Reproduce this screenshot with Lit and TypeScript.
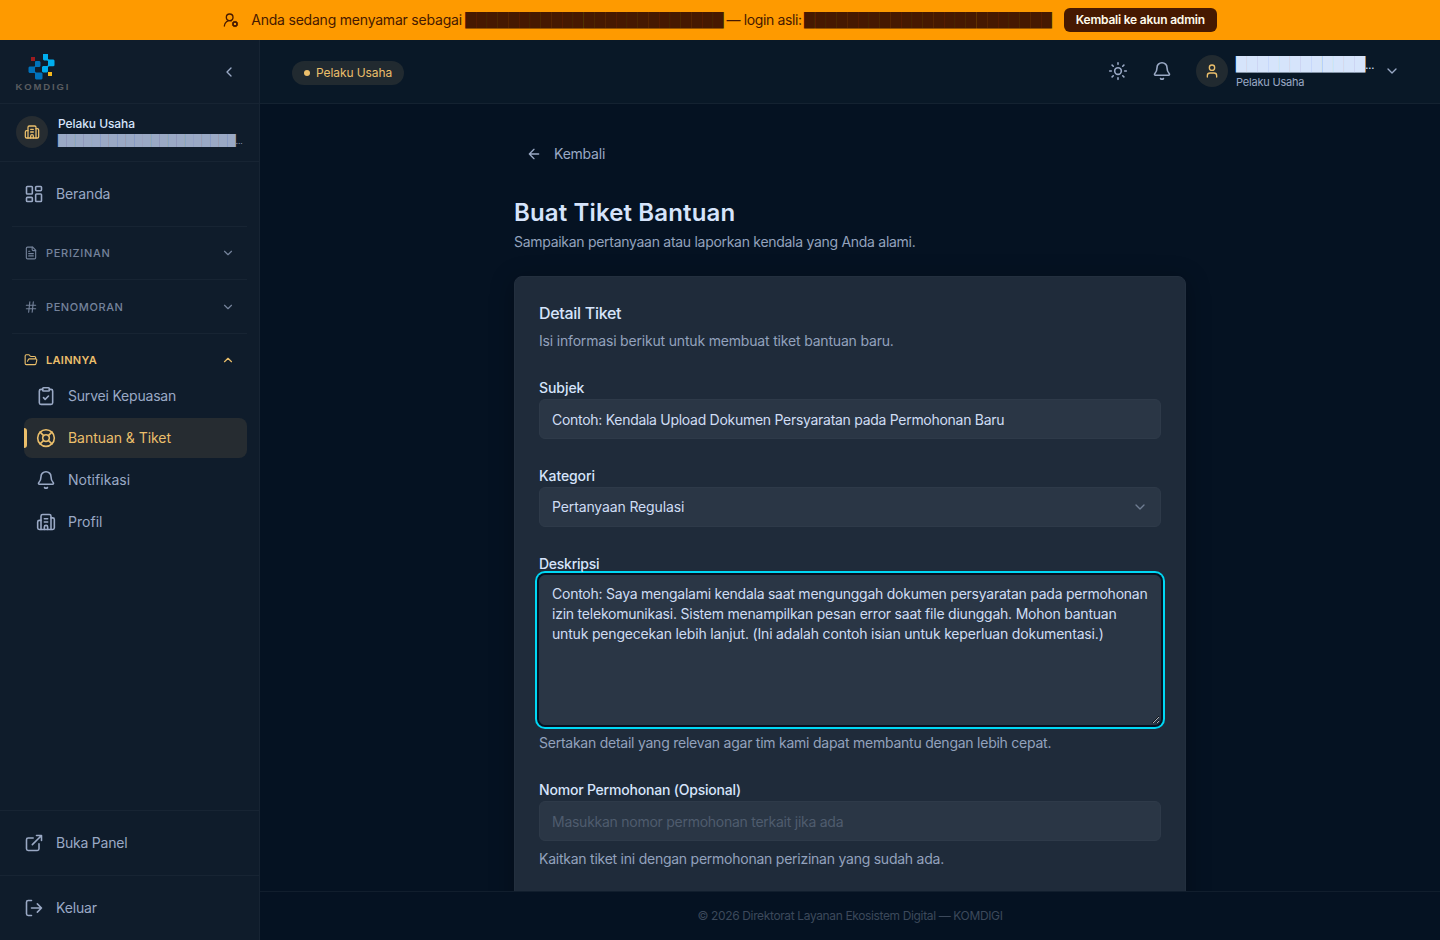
import { LitElement, html, css, svg, TemplateResult } from "lit";
import { customElement, property } from "lit/decorators.js";
import { classMap } from "lit/directives/class-map.js";

const ICONS: Record<string, TemplateResult> = {
  userCog: svg`<path d="M2 21a8 8 0 0 1 10.434-7.62"/><circle cx="10" cy="8" r="5"/><circle cx="18" cy="18" r="3"/><path d="m19.5 14.3-.4.9M16.9 20.8l-.4.9M21.7 19.5l-.9-.4M15.2 16.9l-.9-.4M21.7 16.5l-.9.4M15.2 19.1l-.9.4M19.5 21.7l-.4-.9M16.9 15.2l-.4-.9"/>`,
  dashboard: svg`<rect x="3" y="3" width="7" height="9" rx="1"/><rect x="14" y="3" width="7" height="5" rx="1"/><rect x="14" y="12" width="7" height="9" rx="1"/><rect x="3" y="16" width="7" height="5" rx="1"/>`,
  file: svg`<path d="M15 2H6a2 2 0 0 0-2 2v16a2 2 0 0 0 2 2h12a2 2 0 0 0 2-2V7Z"/><path d="M14 2v4a2 2 0 0 0 2 2h4M10 9H8M16 13H8M16 17H8"/>`,
  hash: svg`<path d="M4 9h16M4 15h16M10 3 8 21M16 3l-2 18"/>`,
  folder: svg`<path d="m6 14 1.5-2.9A2 2 0 0 1 9.24 10H20a2 2 0 0 1 1.94 2.5l-1.54 6a2 2 0 0 1-1.95 1.5H4a2 2 0 0 1-2-2V5a2 2 0 0 1 2-2h3.9a2 2 0 0 1 1.69.9l.81 1.2a2 2 0 0 0 1.67.9H18a2 2 0 0 1 2 2v2"/>`,
  clipboard: svg`<rect x="8" y="2" width="8" height="4" rx="1"/><path d="M16 4h2a2 2 0 0 1 2 2v14a2 2 0 0 1-2 2H6a2 2 0 0 1-2-2V6a2 2 0 0 1 2-2h2M9 14l2 2 4-4"/>`,
  buoy: svg`<circle cx="12" cy="12" r="10"/><circle cx="12" cy="12" r="4"/><path d="m4.93 4.93 4.24 4.24M14.83 9.17l4.24-4.24M14.83 14.83l4.24 4.24M9.17 14.83l-4.24 4.24"/>`,
  bell: svg`<path d="M10.268 21a2 2 0 0 0 3.464 0"/><path d="M3.262 15.326A1 1 0 0 0 4 17h16a1 1 0 0 0 .74-1.673C19.41 13.956 18 12.499 18 8A6 6 0 0 0 6 8c0 4.499-1.411 5.956-2.738 7.326"/>`,
  building: svg`<path d="M10 12h4M10 8h4M14 21v-3a2 2 0 0 0-4 0v3"/><path d="M6 10H4a2 2 0 0 0-2 2v7a2 2 0 0 0 2 2h16a2 2 0 0 0 2-2V9a2 2 0 0 0-2-2h-2"/><path d="M6 21V5a2 2 0 0 1 2-2h8a2 2 0 0 1 2 2v16"/>`,
  external: svg`<path d="M15 3h6v6M10 14 21 3M18 13v6a2 2 0 0 1-2 2H5a2 2 0 0 1-2-2V8a2 2 0 0 1 2-2h6"/>`,
  logout: svg`<path d="m16 17 5-5-5-5M21 12H9M9 21H5a2 2 0 0 1-2-2V5a2 2 0 0 1 2-2h4"/>`,
  sun: svg`<circle cx="12" cy="12" r="4"/><path d="M12 2v2M12 20v2M4.93 4.93l1.41 1.41M17.66 17.66l1.41 1.41M2 12h2M20 12h2M6.34 17.66l-1.41 1.41M19.07 4.93l-1.41 1.41"/>`,
  user: svg`<path d="M19 21v-2a4 4 0 0 0-4-4H9a4 4 0 0 0-4 4v2"/><circle cx="12" cy="7" r="4"/>`,
  arrow: svg`<path d="m12 19-7-7 7-7M19 12H5"/>`,
  left: svg`<path d="m15 18-6-6 6-6"/>`,
  down: svg`<path d="m6 9 6 6 6-6"/>`,
  up: svg`<path d="m18 15-6-6-6 6"/>`,
};

const icon = (name: string, size: number, weight = 2) =>
  html`<svg class="icon" width=${size} height=${size} viewBox="0 0 24 24" fill="none" stroke="currentColor" stroke-width=${weight} stroke-linecap="round" stroke-linejoin="round">${ICONS[name]}</svg>`;

/** Text with its own tracking, in pixels. */
const tx = (text: string, tracking: number) =>
  html`<span style="letter-spacing:${tracking}px">${text}</span>`;

const blocks = (count: number) => html`<span class="blocks">${"█".repeat(count)}</span>`;

const shared = css`
  * { box-sizing: border-box; }
  .icon { display: block; flex: none; }
  .blocks { font-family: "DejaVu Sans", sans-serif; letter-spacing: 0; }
`;

@customElement("impersonation-bar")
class ImpersonationBar extends LitElement {
  static styles = [shared, css`
    :host { display: flex; align-items: center; justify-content: center; height: 40px; flex: none;
      background: #fe9a00; color: #461901; font-size: 14px; font-weight: 400; line-height: 20px; }
    .msg { margin: 0 12px; white-space: pre; display: flex; }
    .from { width: 214px; }
    .sep { width: 80.5px; padding-left: 3px; }
    button { height: 24px; padding: 0 12px; border: 0; border-radius: 6px; background: #461901;
      color: #fffbeb; font: 600 12px/16px Inter, sans-serif; }
  `];
  render() {
    return html`${icon("userCog", 16)}
      <div class="msg"><span class="from">${tx("Anda sedang menyamar sebagai", -0.21)}</span>${blocks(24)}<span class="sep">${tx("— login asli:", -0.38)}</span>${blocks(23)}</div>
      <button>${tx("Kembali ke akun admin", -0.21)}</button>`;
  }
}

type Item = { label: string; icon: string; tracking: number; active?: boolean };

@customElement("nav-item")
class NavItem extends LitElement {
  @property({ attribute: false }) item!: Item;
  static styles = [shared, css`
    :host { display: block; }
    .item { height: 40px; display: flex; align-items: center; gap: 12px; padding: 0 12px;
      border-radius: 8px; font-size: 14px; line-height: 20px; position: relative; }
    .active { background: #262c31; color: #ebbf6b; }
    .active::before { content: ""; position: absolute; left: 0; top: 10px; width: 3px; height: 20px;
      border-radius: 0 3px 3px 0; background: #ebbf6b; }
  `];
  render() {
    const { label, icon: name, tracking, active } = this.item;
    return html`<div class=${classMap({ item: true, active: !!active })}>${icon(name, 20, 1.9)}${tx(label, tracking)}</div>`;
  }
}

@customElement("side-bar")
class SideBar extends LitElement {
  static styles = [shared, css`
    :host { width: 260px; flex: none; display: flex; flex-direction: column;
      background: #0f1c2b; border-right: 1px solid #172433; color: #9aa9c5; }
    .brand { height: 64px; display: flex; align-items: center; justify-content: space-between;
      padding: 0 22px 0 15px; border-bottom: 1px solid #172433; flex: none; }
    .logo { display: block; }
    .org { height: 58px; display: flex; align-items: center; gap: 10px; padding: 0 16px 2px;
      border-bottom: 1px solid #172433; flex: none; }
    .badge { width: 32px; height: 32px; flex: none; border-radius: 50%; background: #262c31; color: #ebbf6b;
      display: grid; place-items: center; }
    .label { padding-top: 2px; }
    .name { color: #d6e4fb; font-size: 12px; font-weight: 500; line-height: 16px; }
    .sub { font-size: 11px; line-height: 16.5px; white-space: nowrap; }
    .dots { font-size: 8px; }
    nav { flex: 1; padding: 12px 12px 0; }
    .section { border-top: 1px solid #172433; padding: 12px 0; }
    .first { margin-top: 12px; }
    .head { height: 28.4px; display: flex; align-items: center; gap: 8px; padding: 0 12px;
      font-size: 11px; line-height: 16px; font-weight: 500; color: #75839b; }
    .head .grow { flex: 1; }
    .open { color: #ebbf6b; font-weight: 600; }
    .list { display: flex; flex-direction: column; gap: 2px; padding: 2px 0 0 12px; }
    .foot { border-top: 1px solid #172433; padding: 12px; }
  `];
  private head(name: string, label: string, tracking: number, open = false) {
    return html`<div class=${classMap({ head: true, open })}>${icon(name, 14, 1.9)}<span class="grow">${tx(label, tracking)}</span>${icon(open ? "up" : "down", 14)}</div>`;
  }
  render() {
    const items: Item[] = [
      { label: "Survei Kepuasan", icon: "clipboard", tracking: -0.2 },
      { label: "Bantuan & Tiket", icon: "buoy", tracking: -0.05, active: true },
      { label: "Notifikasi", icon: "bell", tracking: 0.03 },
      { label: "Profil", icon: "building", tracking: 0.03 },
    ];
    return html`
      <div class="brand">
        <svg class="logo" width="54" height="40" viewBox="0 0 54 40">
          <path fill="#00aeef" d="M28 2h5v5l1 .500h4.500l1 1v5l-1 .800h-4.500l-1 .700v4.500l-1 1h-4l-1-1v-4.500l1-1h4l1-.500v-4.500l-1-.500h-3l-1-1z"/>
          <path fill="#0072bc" d="M20.500 9h4l1 1v4l-1 1h-4l-.500.500v4l1 1h5.500l1 1v5l-1 1h-5.500l-1-1v-5l-.500-.500h-5l-1-1v-4.500l1-1h5l.500-.500v-4z"/>
          <path fill="#9e1b1f" d="M16 5h4v4h-4z"/><path fill="#f5b81c" d="M33 20h4v4h-4z"/>
          <text x="0.500" y="38" font-family="Liberation Sans, sans-serif" font-size="9.500" font-weight="700" fill="#5a5c60" textLength="53">KOMDIGI</text>
        </svg>
        ${icon("left", 16)}
      </div>
      <div class="org">
        <div class="badge">${icon("building", 16, 1.9)}</div>
        <div class="label"><div class="name">${tx("Pelaku Usaha", -0.07)}</div><div class="sub">${blocks(21)}<span class="dots">…</span></div></div>
      </div>
      <nav>
        <nav-item .item=${{ label: "Beranda", icon: "dashboard", tracking: -0.12 }}></nav-item>
        <div class="section first">${this.head("file", "PERIZINAN", 0.69)}</div>
        <div class="section">${this.head("hash", "PENOMORAN", 0.59)}</div>
        <div class="section">${this.head("folder", "LAINNYA", 0.29, true)}
          <div class="list">${items.map((i) => html`<nav-item .item=${i}></nav-item>`)}</div>
        </div>
      </nav>
      <div class="foot"><nav-item .item=${{ label: "Buka Panel", icon: "external", tracking: -0.22 }}></nav-item></div>
      <div class="foot"><nav-item .item=${{ label: "Keluar", icon: "logout", tracking: -0.14 }}></nav-item></div>`;
  }
}

@customElement("top-bar")
class TopBar extends LitElement {
  static styles = [shared, css`
    :host { height: 64px; flex: none; display: flex; align-items: center; justify-content: space-between;
      padding: 0 40px 0 32px; background: #091827; border-bottom: 1px solid #142231; color: #9aa9c5; }
    .role { height: 24px; margin-top: 2px; display: flex; align-items: center; gap: 6px; padding: 0 12px; border-radius: 12px;
      background: #212a30; color: #ebbf6b; font-size: 12px; font-weight: 400; }
    .dot { width: 6px; height: 6px; border-radius: 50%; background: #ebbf6b; }
    .right { display: flex; align-items: center; padding-bottom: 1px; }
    .bell { margin: 0 24px; }
    .avatar { width: 32px; height: 32px; border-radius: 50%; background: #212a30; color: #ebbf6b;
      display: grid; place-items: center; margin-right: 8px; }
    .who { width: 140px; height: 32px; margin-right: 8px; }
    .name { color: #d6e4fb; font-size: 14px; font-weight: 500; line-height: 18px; white-space: nowrap; }
    .dots { font-size: 10px; }
    .kind { font-size: 11px; line-height: 16.5px; }
  `];
  render() {
    return html`
      <div class="role"><span class="dot"></span>${tx("Pelaku Usaha", -0.09)}</div>
      <div class="right">${icon("sun", 20, 1.9)}<div class="bell">${icon("bell", 20, 1.9)}</div>
        <div class="avatar">${icon("user", 16)}</div>
        <div class="who"><div class="name">${blocks(12)}<span class="dots">…</span></div><div class="kind">${tx("Pelaku Usaha", -0.2)}</div></div>
        ${icon("down", 16)}
      </div>`;
  }
}

@customElement("ticket-form")
class TicketForm extends LitElement {
  static styles = [shared, css`
    :host { display: block; width: 672px; margin: 0 auto; padding-top: 32px; font-size: 14px; line-height: 20px; color: #93a2bd; }
    .back { height: 36px; display: flex; align-items: center; gap: 12px; padding: 0 12px; color: #9aa9c5; }
    h1 { margin: 25px 0 0; font-size: 24px; font-weight: 600; line-height: 32px; color: #d6e4fb; }
    .lead { margin-top: 3px; height: 20px; }
    .card { margin-top: 24px; height: 720px; padding: 24px; border: 1px solid #232f3e; border-radius: 8px;
      background: #1f2b3a; box-shadow: 0 4px 24px rgba(0, 0, 0, .3); }
    h2 { margin: 0; font-size: 16px; font-weight: 500; line-height: 24px; color: #d6e4fb; }
    .desc { margin-top: 6px; margin-bottom: 24px; }
    .group { margin-top: 26px; }
    label { display: block; height: 22px; line-height: 22px; font-weight: 500; color: #d6e4fb; }
    .input { height: 40px; display: flex; align-items: center; justify-content: space-between; padding: 2px 12px 0;
      border: 1px solid #2e3a49; border-radius: 6px; background: #2a3645; color: #cfddf4; }
    .select { padding-top: 0; }
    .caret { color: #6f7d92; }
    .hint { color: #4f5c6e; }
    .area { height: 150px; padding: 8px 12px; border-radius: 6px; background: #2a3645; color: #cfddf4;
      border: 1px solid #2a3645; resize: vertical; overflow: auto; white-space: pre; color-scheme: dark;
      box-shadow: 0 0 0 2px #051222, 0 0 0 4px #00d8f5; }
    .note { margin-top: 8px; height: 20px; }
  `];
  render() {
    const lines: [string, number][] = [
      ["Contoh: Saya mengalami kendala saat mengunggah dokumen persyaratan pada permohonan", -0.247],
      ["izin telekomunikasi. Sistem menampilkan pesan error saat file diunggah. Mohon bantuan", -0.222],
      ["untuk pengecekan lebih lanjut. (Ini adalah contoh isian untuk keperluan dokumentasi.)", -0.181],
    ];
    return html`
      <div class="back">${icon("arrow", 16)}${tx("Kembali", -0.22)}</div>
      <h1>${tx("Buat Tiket Bantuan", 0.14)}</h1>
      <div class="lead">${tx("Sampaikan pertanyaan atau laporkan kendala yang Anda alami.", -0.288)}</div>
      <div class="card">
        <h2>${tx("Detail Tiket", -0.3)}</h2>
        <div class="desc">${tx("Isi informasi berikut untuk membuat tiket bantuan baru.", -0.18)}</div>
        <div class="group"><label>${tx("Subjek", -0.05)}</label>
          <div class="input">${tx("Contoh: Kendala Upload Dokumen Persyaratan pada Permohonan Baru", -0.285)}</div></div>
        <div class="group"><label>${tx("Kategori", -0.1)}</label>
          <div class="input select">${tx("Pertanyaan Regulasi", -0.13)}<span class="caret">${icon("down", 16)}</span></div></div>
        <div class="group"><label>${tx("Deskripsi", -0.25)}</label>
          <div class="area" role="textbox">${lines.map(([t, ls]) => html`<div>${tx(t, ls)}</div>`)}</div>
          <div class="note">${tx("Sertakan detail yang relevan agar tim kami dapat membantu dengan lebih cepat.", -0.245)}</div></div>
        <div class="group"><label>${tx("Nomor Permohonan (Opsional)", -0.2)}</label>
          <div class="input hint">${tx("Masukkan nomor permohonan terkait jika ada", -0.26)}</div>
          <div class="note">${tx("Kaitkan tiket ini dengan permohonan perizinan yang sudah ada.", -0.243)}</div></div>
      </div>`;
  }
}

@customElement("app-root")
class AppRoot extends LitElement {
  static styles = [shared, css`
    :host { display: flex; flex-direction: column; width: 100%; height: 100vh; overflow: hidden;
      background: #051222; font-family: Inter, "Noto Sans", sans-serif; }
    .body { flex: 1; display: flex; min-height: 0; }
    .main { flex: 1; display: flex; flex-direction: column; min-width: 0; }
    .scroll { flex: 1; min-height: 0; overflow: hidden; }
    footer { height: 49px; flex: none; border-top: 1px solid #111e2d; display: flex; align-items: center;
      justify-content: center; padding-bottom: 2px; font-size: 12px; color: #3c495b; }
  `];
  render() {
    return html`<impersonation-bar></impersonation-bar>
      <div class="body"><side-bar></side-bar>
        <div class="main"><top-bar></top-bar>
          <div class="scroll"><ticket-form></ticket-form></div>
          <footer>${tx("© 2026 Direktorat Layanan Ekosistem Digital — KOMDIGI", -0.366)}</footer>
        </div>
      </div>`;
  }
}
